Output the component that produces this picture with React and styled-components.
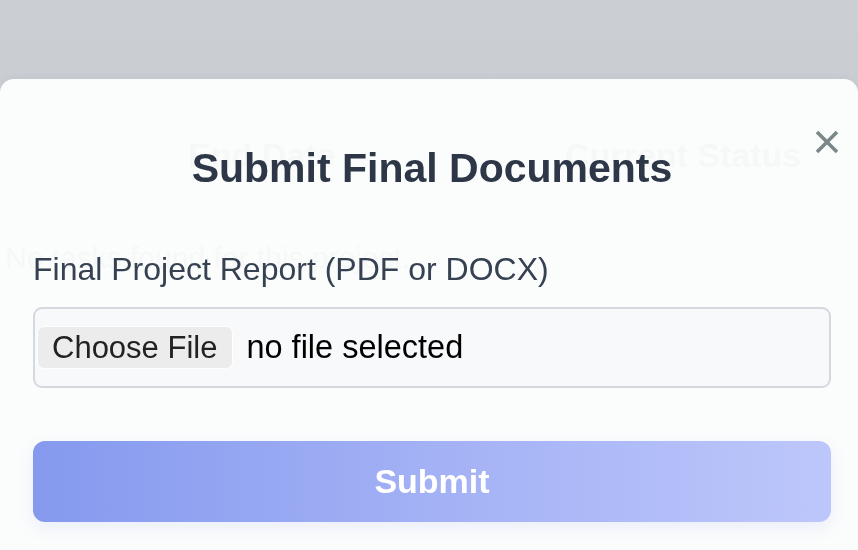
import React from 'react'
import styled, { createGlobalStyle } from 'styled-components'

const Global = createGlobalStyle`
  html, body {
    margin: 0;
    padding: 0;
    background: #ffffff;
    font-family: "Liberation Sans", Arial, Helvetica, sans-serif;
  }
  * {
    box-sizing: border-box;
  }
`

const Page = styled.div`
  width: 858px;
  height: 550px;
  overflow: hidden;
  color: #2d3748;
`

const HeadRow = styled.div`
  display: flex;
  padding: 135px 0 0 188px;
  font-weight: 700;
  font-size: 34px;
  line-height: 40px;

  span:first-child {
    width: 377px;
  }
`

const Empty = styled.p`
  margin: 66px 0 0 5px;
  font-size: 30px;
  line-height: 34px;
`

const Overlay = styled.div`
  position: fixed;
  inset: 0;
  display: flex;
  flex-direction: column;
  padding-top: 79px;
  background: linear-gradient(180deg, rgba(39, 51, 75, 0.24), rgba(39, 51, 75, 0.27));
`

const Modal = styled.div`
  position: relative;
  flex: 1;
  border-radius: 14px 14px 0 0;
  background: rgba(253, 254, 254, 0.97);
  padding: 65px 27px 0 33px;
  box-shadow: 0 -2px 10px rgba(0, 0, 0, 0.04);
`

const Title = styled.h2`
  margin: 0;
  text-align: center;
  font-size: 41px;
  line-height: 48px;
  font-weight: 700;
  color: #2d3748;
`

const Close = styled.button`
  position: absolute;
  top: 47px;
  right: 15px;
  border: none;
  background: none;
  padding: 0;
  width: 32px;
  height: 32px;
  cursor: pointer;
  display: flex;
  align-items: center;
  justify-content: center;
`

const Field = styled.label`
  display: block;
  margin-top: 58px;
  font-size: 32px;
  line-height: 38px;
  color: #364152;
`

const FileBox = styled.div`
  display: flex;
  align-items: center;
  gap: 13px;
  margin-top: 19px;
  height: 81px;
  padding: 0 2px;
  border: 2px solid #d3d9de;
  border-radius: 9px;
  background: #f8f9fb;
  font-size: 32.5px;
  color: #000;
`

const ChooseButton = styled.span`
  display: inline-flex;
  align-items: center;
  height: 43px;
  padding: 0 15px 0 14px;
  border-radius: 7px;
  background: #ececec;
  border: 1px solid #ffffff;
  color: #222;
  font-size: 31px;
`

const Submit = styled.button`
  display: block;
  width: 100%;
  margin-top: 53px;
  height: 81px;
  border: none;
  border-radius: 12px;
  background: linear-gradient(90deg, #8599ee 0%, #a3b1f5 50%, #bdc7fb 100%);
  color: #ffffff;
  font-family: "Liberation Sans", Arial, sans-serif;
  font-size: 34px;
  font-weight: 700;
  box-shadow: 0 6px 16px rgba(120, 140, 230, 0.12);
`

export default function App() {
  return (
    <>
      <Global />
      <Page>
        <HeadRow>
          <span>End Date</span>
          <span>Current Status</span>
        </HeadRow>
        <Empty>No tasks found for this project.</Empty>
      </Page>
      <Overlay>
        <Modal>
          <Close aria-label="Close">
            <svg width="26" height="26" viewBox="0 0 26 26">
              <path d="M3 3 L23 23 M23 3 L3 23" stroke="#7b8788" strokeWidth="3.6" strokeLinecap="butt" />
            </svg>
          </Close>
          <Title>Submit Final Documents</Title>
          <Field>Final Project Report (PDF or DOCX)</Field>
          <FileBox>
            <ChooseButton>Choose File</ChooseButton>
            <span>no file selected</span>
          </FileBox>
          <Submit>Submit</Submit>
        </Modal>
      </Overlay>
    </>
  )
}
